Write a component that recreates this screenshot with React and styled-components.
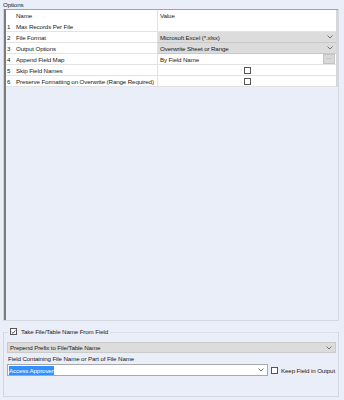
import styled, { createGlobalStyle } from "styled-components"

const GlobalStyle = createGlobalStyle`
  body {
    margin: 0;
    background: #eaeef8;
    font-family: "Liberation Sans", Arial, sans-serif;
  }
`;

const Page = styled.div`
  width: 344px;
  height: 400px;
  background: #eaeef8;
  font-size: 6.2px;
  letter-spacing: -0.12px;
  color: #1a1a1a;
  display: flex;
  flex-direction: column;
  overflow: hidden;
`;

const Title = styled.div`
  height: 9px;
  line-height: 10px;
  padding-left: 3px;
`;

const GridFrame = styled.div`
  margin: 0 5px 0 3px;
  height: 312px;
  box-sizing: border-box;
  border-left: 1px solid #cfd3da;
  border-right: 1px solid #d4d8e0;
  border-bottom: 1px solid #d4d8e0;
  display: flex;
`;

const GridInner = styled.div`
  flex: 1;
  border-left: 2px solid #7c7c7c;
  border-top: 1px solid #a3a3a3;
  display: flex;
  flex-direction: column;
`;

const Table = styled.div`
  background: #fff;
  border-right: 2px solid #d6d6d6;
  display: grid;
  grid-template-columns: 8px 143px 1fr;
  grid-auto-rows: 11px;
`;

const Cell = styled.div`
  display: flex;
  align-items: center;
  padding-left: ${p => (p.$pad ? "2px" : "0")};
  border-bottom: ${p => (p.$line ? "1px solid #e3e3e3" : "none")};
  border-left: ${p => (p.$sep ? "1px solid #e3e3e3" : "none")};
  box-sizing: border-box;
  white-space: nowrap;
  overflow: hidden;
`;

const Num = styled(Cell)`
  padding-left: 1px;
`;

const ComboCell = styled(Cell)`
  background: #dcdcdc;
  justify-content: space-between;
  padding-right: 3px;
  border-bottom: 1px solid #c8c8c8;
`;

const TextCell = styled(Cell)`
  justify-content: space-between;
  padding-right: 1px;
`;

const DotsButton = styled.div`
  width: 10px;
  height: 8px;
  background: #d8d8d8;
  border: 1px solid #c4c4c4;
  color: #888;
  font-size: 6px;
  line-height: 5px;
  text-align: center;
`;

const CheckCell = styled(Cell)`
  justify-content: center;
`;

const Box = styled.div`
  width: 7px;
  height: 7px;
  box-sizing: border-box;
  border: 1px solid #555;
  background: #fff;
  display: flex;
  align-items: center;
  justify-content: center;
  flex-shrink: 0;
`;

const Group = styled.div`
  margin: 11px 5px 0 3px;
  height: 65px;
  box-sizing: border-box;
  border: 1px solid #d3d7df;
  border-top-color: #d9dde4;
  position: relative;
  padding: 9px 2px 0 3px;
  display: flex;
  flex-direction: column;
`;

const Legend = styled.div`
  position: absolute;
  top: -5px;
  left: 4px;
  padding: 0 2px;
  background: #eaeef8;
  display: flex;
  align-items: center;
  gap: 4px;
`;

const Combo = styled.div`
  height: 11px;
  box-sizing: border-box;
  background: #dcdcdc;
  border: 1px solid #cacaca;
  display: flex;
  align-items: center;
  justify-content: space-between;
  padding: 0 3px 0 2px;
`;

const FieldLabel = styled.div`
  height: 11px;
  line-height: 12px;
  padding-left: 1px;
`;

const InputRow = styled.div`
  display: flex;
  align-items: center;
  gap: 3px;
  white-space: nowrap;
`;

const Input = styled.div`
  width: 261px;
  height: 12px;
  box-sizing: border-box;
  background: #fff;
  border: 1px solid #a9a9a9;
  display: flex;
  align-items: center;
  justify-content: space-between;
  padding: 0 3px 0 1px;
`;

const Selected = styled.span`
  background: #3390ff;
  color: #fff;
  line-height: 9px;
`;

const Chevron = () => (
  <svg width="6" height="4" viewBox="0 0 6 4">
    <path d="M0.5 0.5 L3 3 L5.5 0.5" fill="none" stroke="#666" strokeWidth="0.9" />
  </svg>
);

const Tick = () => (
  <svg width="6" height="6" viewBox="0 0 6 6">
    <path d="M0.8 3 L2.4 4.6 L5.3 1" fill="none" stroke="#333" strokeWidth="1" />
  </svg>
);

const rows = [
  { n: 1, name: "Max Records Per File", kind: "empty" },
  { n: 2, name: "File Format", kind: "combo", value: "Microsoft Excel (*.xlsx)" },
  { n: 3, name: "Output Options", kind: "combo", value: "Overwrite Sheet or Range" },
  { n: 4, name: "Append Field Map", kind: "text", value: "By Field Name" },
  { n: 5, name: "Skip Field Names", kind: "check" },
  { n: 6, name: "Preserve Formatting on Overwrite (Range Required)", kind: "check" },
];

function ValueCell({ row }) {
  if (row.kind === "combo") {
    return (
      <ComboCell $pad $sep>
        <span>{row.value}</span>
        <Chevron />
      </ComboCell>
    );
  }
  if (row.kind === "text") {
    return (
      <TextCell $pad $sep $line>
        <span>{row.value}</span>
        <DotsButton>...</DotsButton>
      </TextCell>
    );
  }
  if (row.kind === "check") {
    return (
      <CheckCell $sep $line>
        <Box />
      </CheckCell>
    );
  }
  return <Cell $sep $line />;
}

function App() {
  return (
    <Page>
      <GlobalStyle />
      <Title>Options</Title>
      <GridFrame>
        <GridInner>
          <Table>
            <Cell />
            <Cell $pad>Name</Cell>
            <Cell $pad $sep>Value</Cell>
            {rows.map(r => [
              <Num key={"n" + r.n} $line>{r.n}</Num>,
              <Cell key={"l" + r.n} $pad $line>{r.name}</Cell>,
              <ValueCell key={"v" + r.n} row={r} />,
            ])}
          </Table>
        </GridInner>
      </GridFrame>
      <Group>
        <Legend>
          <Box>
            <Tick />
          </Box>
          <span>Take File/Table Name From Field</span>
        </Legend>
        <Combo>
          <span>Prepend Prefix to File/Table Name</span>
          <Chevron />
        </Combo>
        <FieldLabel>Field Containing File Name or Part of File Name</FieldLabel>
        <InputRow>
          <Input>
            <Selected>Access Approver</Selected>
            <Chevron />
          </Input>
          <Box />
          <span>Keep Field in Output</span>
        </InputRow>
      </Group>
    </Page>
  );
}

export default App;
